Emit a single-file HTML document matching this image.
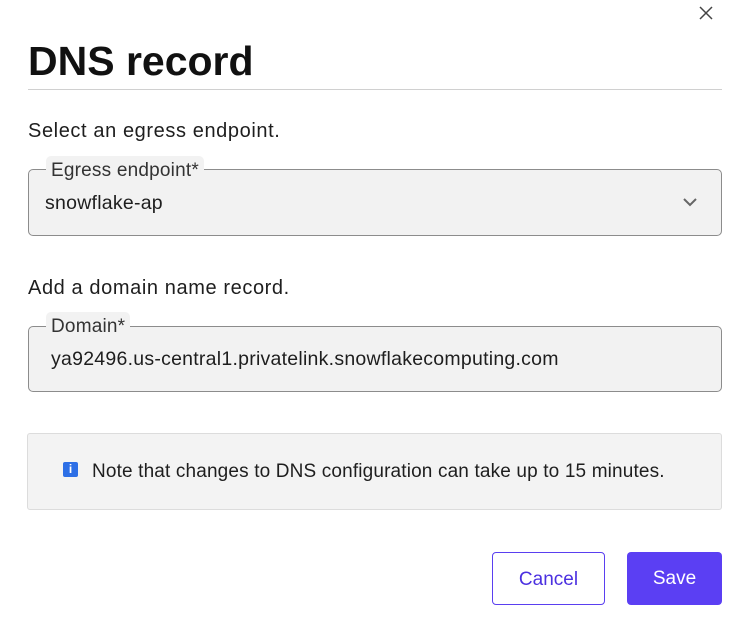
<!DOCTYPE html>
<html><head><style>
body{margin:0;width:750px;height:632px;background:#fff;font-family:"Liberation Sans",Arial,sans-serif;color:#1e1e1e;position:relative;overflow:hidden}
.a{position:absolute}
.box{position:absolute;left:28px;width:692px;border:1px solid #8c8c8c;border-radius:5px;background:#f2f2f2}
.chip{position:absolute;background:#f2f2f2;border-radius:5px;font-size:19px;letter-spacing:0.2px;color:#333;padding:0 5px;height:30px;line-height:30px}
.val{position:absolute;font-size:19.5px;letter-spacing:0.25px;color:#1e1e1e}
</style></head><body>
<svg class="a" style="left:698px;top:5px" width="16" height="16" viewBox="0 0 16 16"><path d="M2 2L14 14M14 2L2 14" stroke="#444" stroke-width="1.5"/></svg>
<div class="a" style="left:28px;top:38px;font-size:41px;font-weight:bold;color:#111">DNS record</div>
<div class="a" style="left:28px;top:89px;width:694px;height:1px;background:#d0d0d0"></div>
<div class="a" style="left:28px;top:120px;font-size:20px;letter-spacing:0.6px">Select an egress endpoint.</div>
<div class="box" style="top:169px;height:65px"></div>
<div class="chip" style="left:46px;top:156px">Egress endpoint*</div>
<div class="val" style="left:45px;top:192px">snowflake-ap</div>
<svg class="a" style="left:682px;top:196px" width="16" height="12" viewBox="0 0 16 12"><path d="M2 3L8 9L14 3" fill="none" stroke="#666" stroke-width="2"/></svg>
<div class="a" style="left:28px;top:277px;font-size:20px;letter-spacing:0.6px">Add a domain name record.</div>
<div class="box" style="top:326px;height:64px"></div>
<div class="chip" style="left:46px;top:312px">Domain*</div>
<div class="val" style="left:51px;top:348px">ya92496.us-central1.privatelink.snowflakecomputing.com</div>
<div class="a" style="left:27px;top:433px;width:693px;height:75px;border:1px solid #dcdcdc;border-radius:3px;background:#f3f3f3"></div>
<div class="a" style="left:63px;top:462px;width:15px;height:15px;background:#2d6fe6;border-radius:2px;color:#fff;font-size:12px;font-weight:bold;text-align:center;line-height:15px">i</div>
<div class="a" style="left:92px;top:461px;font-size:19px;letter-spacing:0.15px">Note that changes to DNS configuration can take up to 15 minutes.</div>
<div class="a" style="left:492px;top:552px;width:111px;height:51px;border:1px solid #5a3ff0;border-radius:4px;color:#4b30e0;font-size:19px;text-align:center;line-height:53px">Cancel</div>
<div class="a" style="left:627px;top:552px;width:95px;height:53px;background:#5b3ff3;border-radius:4px;color:#fff;font-size:19px;text-align:center;line-height:54px">Save</div>
</body></html>
